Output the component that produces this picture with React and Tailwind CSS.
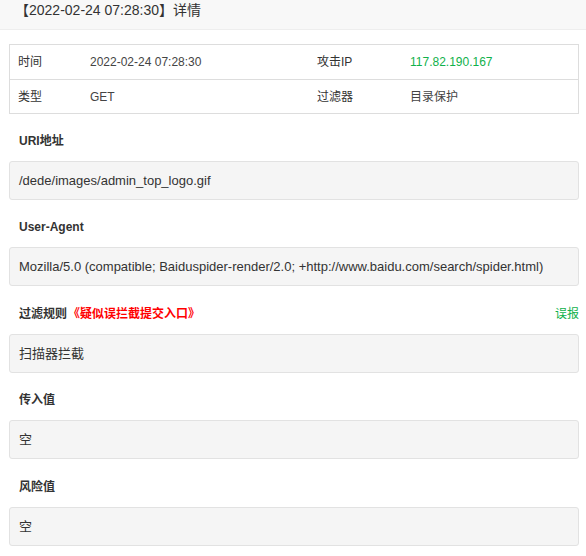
export default function App() {
  const font = { fontFamily: '"Liberation Sans", "Noto Sans CJK SC", sans-serif' };
  const Section = ({ label, extra, right, value, mt }) => (
    <div className={mt}>
      <div className="flex h-5 items-center justify-between pl-[10px] text-[12px] leading-5">
        <div className="flex items-center">
          <span className="font-bold text-[#333]">{label}</span>
          {extra}
        </div>
        {right}
      </div>
      <div className="mt-[10px] flex h-[39px] items-center rounded-[3px] border border-[#e2e2e2] bg-[#f5f5f5] pl-[9px] text-[13px] text-[#333]">
        {value}
      </div>
    </div>
  );
  return (
    <div className="h-[556px] w-[586px] overflow-hidden bg-white" style={font}>
      <div className="flex h-[30px] items-start border-b border-[#eee] bg-[#f8f8f8] pl-[15px]">
        <span className="text-[14px] leading-5 text-[#333]">【2022-02-24 07:28:30】详情</span>
      </div>
      <div className="pl-[9px] pr-[7px] pt-[14px]">
        <div className="border border-[#ddd] text-[12px]">
          <div className="grid h-[35px] grid-cols-[72px_227px_93px_1fr] items-center border-b border-[#ddd]">
            <span className="pl-[8px] text-[#333]">时间</span>
            <span className="pl-[8px] text-[#444]">2022-02-24 07:28:30</span>
            <span className="pl-[8px] text-[#333]">攻击IP</span>
            <span className="pl-[8px] text-[#10b14b]">117.82.190.167</span>
          </div>
          <div className="grid h-[33px] grid-cols-[72px_227px_93px_1fr] items-center">
            <span className="pl-[8px] text-[#333]">类型</span>
            <span className="pl-[8px] text-[#444]">GET</span>
            <span className="pl-[8px] text-[#333]">过滤器</span>
            <span className="pl-[8px] text-[#444]">目录保护</span>
          </div>
        </div>
        <Section mt="mt-[17px]" label="URI地址" value="/dede/images/admin_top_logo.gif" />
        <Section
          mt="mt-[17px]"
          label="User-Agent"
          value="Mozilla/5.0 (compatible; Baiduspider-render/2.0; +http://www.baidu.com/search/spider.html)"
        />
        <Section
          mt="mt-[18px]"
          label="过滤规则"
          extra={<span className="ml-[1px] font-bold text-[#ff0000]">《疑似误拦截提交入口》</span>}
          right={<span className="text-[#10b14b]">误报</span>}
          value="扫描器拦截"
        />
        <Section mt="mt-[17px]" label="传入值" value="空" />
        <Section mt="mt-[18px]" label="风险值" value="空" />
      </div>
    </div>
  );
}
